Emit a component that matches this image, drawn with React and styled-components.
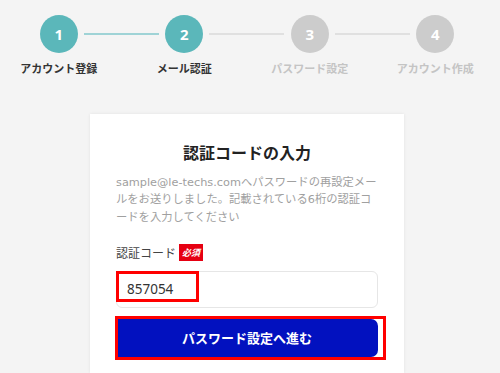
import styled, { createGlobalStyle } from "styled-components"

const GlobalStyle = createGlobalStyle`
    body {
        margin: 0;
        background-color: #f4f4f4;
        font-family: "Noto Sans", "Noto Sans CJK JP", sans-serif;
    }
`

const STEPS = [
    { num: 1, label: "アカウント登録", state: "done" },
    { num: 2, label: "メール認証", state: "current" },
    { num: 3, label: "パスワード設定", state: "todo" },
    { num: 4, label: "アカウント作成", state: "todo" },
]

export default function App () {
    return(
        <>
            <GlobalStyle/>
            <Page>
                <Stepper>
                    {STEPS.map((step, i) => (
                        <Step key={step.num} line={i < STEPS.length - 1 ? (step.state === "done" ? "active" : "idle") : null}>
                            <Circle active={step.state !== "todo"}>{step.num}</Circle>
                            <StepLabel active={step.state !== "todo"}>{step.label}</StepLabel>
                        </Step>
                    ))}
                </Stepper>

                <Card>
                    <Title>認証コードの入力</Title>
                    <Description>
                        sample@le-techs.comへパスワードの再設定メールをお送りしました。記載されている6桁の認証コードを入力してください
                    </Description>

                    <Label>
                        認証コード<Required>必須</Required>
                    </Label>
                    <InputWrap>
                        <CodeInput defaultValue="857054" readOnly/>
                        <Highlight style={{ width: 83, height: 31 }}/>
                    </InputWrap>

                    <ButtonWrap>
                        <SubmitButton>パスワード設定へ進む</SubmitButton>
                        <ButtonHighlight/>
                    </ButtonWrap>
                </Card>
            </Page>
        </>
    )
}

const Page = styled.div`
    width: 500px;
    height: 373px;
    overflow: hidden;
    display: flex;
    flex-direction: column;
    align-items: center;
`
const Stepper = styled.div`
    width: 502px;
    margin-left: -6px;
    padding-top: 15px;
    display: grid;
    grid-template-columns: repeat(4, 1fr);
`
const Step = styled.div`
    position: relative;
    display: flex;
    flex-direction: column;
    align-items: center;
    &::after {
        content: "";
        display: ${props => props.line ? "block" : "none"};
        position: absolute;
        top: 18px;
        left: calc(50% + 25px);
        width: 75px;
        height: 2px;
        background-color: ${props => props.line === "active" ? "#9fd3d6" : "#e0e0e0"};
    }
`
const Circle = styled.div`
    width: 38px;
    height: 38px;
    border-radius: 50%;
    display: flex;
    align-items: center;
    justify-content: center;
    background-color: ${props => props.active ? "#5bb7ba" : "#cccccc"};
    color: #ffffff;
    font-size: 15px;
    font-weight: 700;
`
const StepLabel = styled.div`
    margin-top: 7px;
    font-family: "Noto Sans CJK JP", sans-serif;
    font-size: 11px;
    font-weight: 700;
    line-height: 16px;
    white-space: nowrap;
    color: ${props => props.active ? "#333333" : "#c4c4c4"};
`
const Card = styled.div`
    margin-top: 38px;
    margin-left: -6px;
    width: 314px;
    flex: 1;
    box-sizing: border-box;
    padding: 27px 26px 0;
    background-color: #ffffff;
    box-shadow: 0 0 3px rgba(0, 0, 0, 0.08);
`
const Title = styled.h1`
    margin: 0;
    text-align: center;
    font-family: "Noto Sans CJK JP", sans-serif;
    font-size: 16px;
    font-weight: 700;
    line-height: 22px;
    color: #222222;
`
const Description = styled.p`
    margin: 11px 0 0;
    font-family: "DejaVu Sans", "Noto Sans CJK JP", sans-serif;
    font-size: 11.3px;
    line-height: 17.3px;
    color: #a0a0a0;
`
const Label = styled.div`
    margin-top: 18px;
    display: flex;
    align-items: center;
    gap: 3px;
    font-family: "Noto Sans CJK JP", sans-serif;
    font-size: 12px;
    line-height: 17px;
    color: #444444;
`
const Required = styled.span`
    display: inline-flex;
    align-items: center;
    justify-content: center;
    width: 24px;
    height: 17px;
    background-color: #e60012;
    color: #ffffff;
    font-size: 9px;
    font-weight: 700;
    font-style: italic;
`
const InputWrap = styled.div`
    position: relative;
    margin-top: 10px;
`
const CodeInput = styled.input`
    display: block;
    width: 100%;
    height: 37px;
    box-sizing: border-box;
    padding: 0 10px;
    border: 1px solid #e6e6e6;
    border-radius: 6px;
    font-family: "Noto Sans", sans-serif;
    font-size: 13.5px;
    color: #333333;
    outline: none;
`
const Highlight = styled.div`
    position: absolute;
    top: 0;
    left: 0;
    box-sizing: border-box;
    border: 3px solid #ff0000;
`
const ButtonWrap = styled.div`
    position: relative;
    margin-top: 11px;
`
const SubmitButton = styled.button`
    display: block;
    width: 100%;
    height: 38px;
    border: none;
    border-radius: 2px 7px 7px 2px;
    background-color: #0211bf;
    color: #ffffff;
    font-family: "Noto Sans CJK JP", sans-serif;
    font-size: 13px;
    font-weight: 700;
`
const ButtonHighlight = styled.div`
    position: absolute;
    top: -3px;
    left: -1px;
    right: -8px;
    bottom: -3px;
    border: 3px solid #ff0000;
`
